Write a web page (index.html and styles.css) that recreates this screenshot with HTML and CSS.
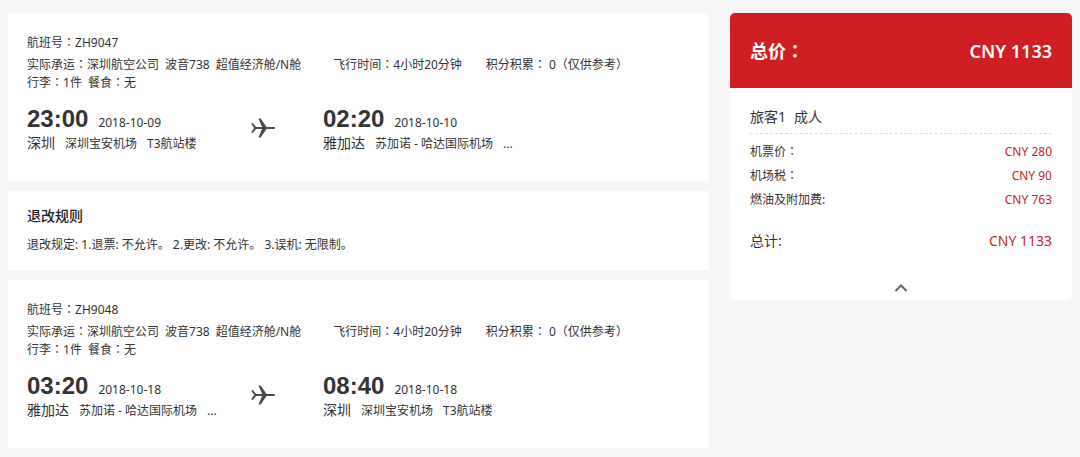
FILE: index.html
```html
<!DOCTYPE html>
<html lang="zh-CN">
<head>
    <meta charset="UTF-8">
    <meta name="viewport" content="width=device-width, initial-scale=1.0">
    <title>航班信息</title>
    <link rel="stylesheet" href="styles.css">
</head>
<body>
    <div class="page">
        <main class="flights">
            <section class="card flight">
                <p class="flight-no">航班号<span class="colon" lang="zh-TW">：</span>ZH9047</p>
                <div class="info">
                    <p class="carrier"><span>实际承运<span class="colon" lang="zh-TW">：</span>深圳航空公司</span><span>波音738</span><span>超值经济舱/N舱</span></p>
                    <p class="duration">飞行时间<span class="colon" lang="zh-TW">：</span>4小时20分钟</p>
                    <p>积分积累<span class="colon" lang="zh-TW">：</span> 0（仅供参考）</p>
                </div>
                <p class="carrier"><span>行李<span class="colon" lang="zh-TW">：</span>1件</span><span>餐食<span class="colon" lang="zh-TW">：</span>无</span></p>
                <div class="route">
                    <div>
                        <p class="when"><strong class="time">23:00</strong><span>2018-10-09</span></p>
                        <p class="where"><span class="city">深圳</span><span>深圳宝安机场</span><span>T3航站楼</span></p>
                    </div>
                    <svg class="plane" viewBox="0 0 24 20" aria-hidden="true">
                        <path class="body" d="M4 10H23M1.500 6L4.500 10 1.500 14"/>
                        <path d="M7.500.5h2.200L15.500 9v2L9.700 19.500H7.500L11.500 10z"/>
                    </svg>
                    <div>
                        <p class="when"><strong class="time">02:20</strong><span>2018-10-10</span></p>
                        <p class="where"><span class="city">雅加达</span><span>苏加诺 - 哈达国际机场</span><span>...</span></p>
                    </div>
                </div>
            </section>

            <section class="card rules">
                <h2>退改规则</h2>
                <p>退改规定: 1.退票: 不允许。 2.更改: 不允许。 3.误机: 无限制。</p>
            </section>

            <section class="card flight">
                <p class="flight-no">航班号<span class="colon" lang="zh-TW">：</span>ZH9048</p>
                <div class="info">
                    <p class="carrier"><span>实际承运<span class="colon" lang="zh-TW">：</span>深圳航空公司</span><span>波音738</span><span>超值经济舱/N舱</span></p>
                    <p class="duration">飞行时间<span class="colon" lang="zh-TW">：</span>4小时20分钟</p>
                    <p>积分积累<span class="colon" lang="zh-TW">：</span> 0（仅供参考）</p>
                </div>
                <p class="carrier"><span>行李<span class="colon" lang="zh-TW">：</span>1件</span><span>餐食<span class="colon" lang="zh-TW">：</span>无</span></p>
                <div class="route">
                    <div>
                        <p class="when"><strong class="time">03:20</strong><span>2018-10-18</span></p>
                        <p class="where"><span class="city">雅加达</span><span>苏加诺 - 哈达国际机场</span><span>...</span></p>
                    </div>
                    <svg class="plane" viewBox="0 0 24 20" aria-hidden="true">
                        <path class="body" d="M4 10H23M1.500 6L4.500 10 1.500 14"/>
                        <path d="M7.500.5h2.200L15.500 9v2L9.700 19.500H7.500L11.500 10z"/>
                    </svg>
                    <div>
                        <p class="when"><strong class="time">08:40</strong><span>2018-10-18</span></p>
                        <p class="where"><span class="city">深圳</span><span>深圳宝安机场</span><span>T3航站楼</span></p>
                    </div>
                </div>
            </section>
        </main>

        <aside class="price">
            <div class="price-total">
                <span>总价<span class="colon" lang="zh-TW">：</span></span>
                <span>CNY 1133</span>
            </div>
            <div class="price-detail">
                <h3><span>旅客1</span><span>成人</span></h3>
                <dl>
                    <div class="row"><dt>机票价<span class="colon" lang="zh-TW">：</span></dt><dd>CNY 280</dd></div>
                    <div class="row"><dt>机场税<span class="colon" lang="zh-TW">：</span></dt><dd>CNY 90</dd></div>
                    <div class="row"><dt>燃油及附加费:</dt><dd>CNY 763</dd></div>
                    <div class="row sum"><dt>总计:</dt><dd>CNY 1133</dd></div>
                </dl>
            </div>
            <button class="toggle" type="button" aria-label="收起">
                <svg viewBox="0 0 14 8" aria-hidden="true"><path d="M1.500 7L7 1.500 12.500 7"/></svg>
            </button>
        </aside>
    </div>
</body>
</html>
```
FILE: styles.css
```css
* {
    box-sizing: border-box;
}
body {
    margin: 0;
    background: #f6f6f6;
    color: #333;
    font-family: "Noto Sans", "Noto Sans CJK SC", sans-serif;
    font-size: 12px;
    line-height: 18px;
}
p, h2, h3, dl, dd {
    margin: 0;
}
/* full-width colon centred in its cell */
.colon {
    font-family: "Noto Sans CJK TC", sans-serif;
    line-height: 1;
}
.page {
    display: flex;
    align-items: flex-start;
    gap: 21px;
    padding: 13px 8px 9px;
}
.flights {
    flex: 1;
    display: flex;
    flex-direction: column;
    gap: 10px;
}
.card {
    background: #fff;
    padding: 21px 19px 27px;
}

/* Flight */
.flight-no {
    margin-bottom: 4px;
}
.info {
    display: flex;
}
.carrier {
    display: flex;
    gap: 6px;
}
.duration {
    margin: 0 24px 0 32px;
}
.route {
    display: grid;
    grid-template-columns: 224px 24px 1fr;
    align-items: start;
    margin-top: 13px;
}
.route div:last-child {
    margin-left: 48px;
}
.when, .where {
    display: flex;
    align-items: baseline;
    gap: 10px;
}
.time {
    font-family: "Liberation Sans", sans-serif;
    font-size: 24px;
    line-height: 28px;
}
.where {
    line-height: 20px;
}
.city {
    font-size: 14px;
}
.plane {
    width: 24px;
    height: 20px;
    margin-top: 13px;
    fill: #4a4a4a;
}
.plane .body {
    fill: none;
    stroke: #4a4a4a;
    stroke-width: 2;
    stroke-linecap: round;
}

/* Rules */
.rules {
    padding: 15px 19px 16px;
}
.rules h2 {
    font-size: 14px;
    font-weight: 500;
    line-height: 20px;
    margin-bottom: 10px;
    color: #222;
}

/* Price */
.price {
    width: 342px;
    background: #fff;
    border-radius: 5px;
    overflow: hidden;
}
.price-total {
    display: flex;
    justify-content: space-between;
    align-items: center;
    height: 75px;
    padding: 0 20px;
    background: #d01f23;
    color: #fff;
    font-size: 18px;
    font-weight: 600;
}
.price-detail {
    padding: 18px 20px 0;
}
.price-detail h3 {
    display: flex;
    gap: 8px;
    padding-bottom: 5px;
    margin-bottom: 6px;
    border-bottom: 1px dashed #ddd;
    font-size: 14px;
    font-weight: 400;
    line-height: 22px;
}
.row {
    display: flex;
    justify-content: space-between;
    line-height: 24px;
}
.row dd {
    color: #c7252b;
}
.sum {
    margin-top: 17px;
    font-size: 14px;
}
.toggle {
    display: block;
    width: 100%;
    margin-top: 23px;
    padding: 8px 0;
    border: 0;
    background: none;
    line-height: 8px;
    cursor: pointer;
}
.toggle svg {
    display: block;
    width: 14px;
    height: 8px;
    margin: 0 auto;
    fill: none;
    stroke: #666;
    stroke-width: 2;
}
```
